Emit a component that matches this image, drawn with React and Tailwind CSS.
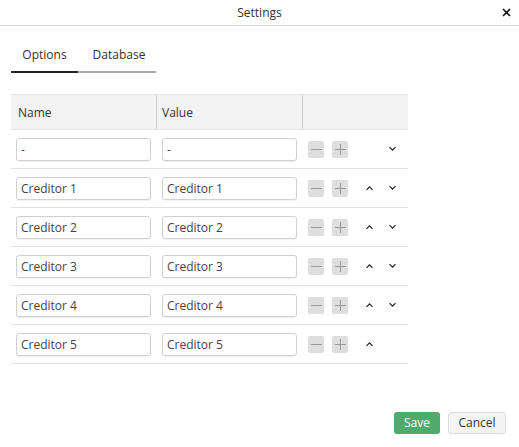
import React from 'react'

const ROWS = [
  { name: '-', value: '-', up: false, down: true },
  { name: 'Creditor 1', value: 'Creditor 1', up: true, down: true },
  { name: 'Creditor 2', value: 'Creditor 2', up: true, down: true },
  { name: 'Creditor 3', value: 'Creditor 3', up: true, down: true },
  { name: 'Creditor 4', value: 'Creditor 4', up: true, down: true },
  { name: 'Creditor 5', value: 'Creditor 5', up: true, down: false },
]

function Chevron({ up }) {
  return (
    <svg width="9" height="6" viewBox="0 0 9 6" className="block">
      <polyline
        points={up ? '1.5,4.8 4.5,1.8 7.5,4.8' : '1.5,1.2 4.5,4.2 7.5,1.2'}
        fill="none"
        stroke="#222"
        strokeWidth="1.2"
      />
    </svg>
  )
}

function SquareButton({ plus }) {
  return (
    <button className="w-[16px] h-[17px] bg-[#dedede] rounded-[2px] flex items-center justify-center">
      <svg width="11" height="11" viewBox="0 0 11 11">
        <line x1="0" y1="5.5" x2="11" y2="5.5" stroke="#9a9a9a" strokeWidth="1" />
        {plus && <line x1="5.5" y1="0" x2="5.5" y2="11" stroke="#9a9a9a" strokeWidth="1" />}
      </svg>
    </button>
  )
}

function TextBox({ value }) {
  return (
    <input
      readOnly
      value={value}
      className="w-[135px] h-[23px] px-[4px] border border-[#d0d0d0] rounded-[3px] text-[12px] text-[#444] bg-white shadow-[0_1px_1px_rgba(0,0,0,0.06)] outline-none"
    />
  )
}

export default function App() {
  return (
    <div className="h-[447px] w-[519px] bg-white flex flex-col text-[#333] font-['Open_Sans',sans-serif] text-[12px]">
      {/* Title bar */}
      <div className="h-[26px] border-b border-[#dcdcdc] flex items-center justify-center relative">
        <span className="text-[12px] text-[#333]">Settings</span>
        <button className="absolute right-[6px] top-[5px] w-[14px] h-[14px] flex items-center justify-center">
          <svg width="9" height="9" viewBox="0 0 9 9">
            <line x1="1" y1="1" x2="8" y2="8" stroke="#111" strokeWidth="1.6" />
            <line x1="8" y1="1" x2="1" y2="8" stroke="#111" strokeWidth="1.6" />
          </svg>
        </button>
      </div>

      {/* Tabs */}
      <div className="flex pl-[11px] mt-[13px]">
        <div className="h-[34px] w-[67px] flex items-center justify-center border-b-2 border-[#222]">
          Options
        </div>
        <div className="h-[34px] w-[78px] flex items-center justify-center pl-[4px] border-b-2 border-[#a9a9a9]">
          Database
        </div>
      </div>

      {/* Table */}
      <div className="ml-[11px] mt-[21px] w-[397px]">
        <div className="flex h-[36px] bg-[#f3f3f3] border-t border-[#e6e6e6] border-b border-[#dcdcdc]">
          <div className="w-[146px] flex items-center pl-[7px] pt-[1px] border-r border-[#cfcfcf]">Name</div>
          <div className="w-[146px] flex items-center pl-[5px] pt-[1px] border-r border-[#cfcfcf]">Value</div>
          <div className="flex-1" />
        </div>
        {ROWS.map((row, i) => (
          <div key={i} className="flex items-center h-[39px] border-b border-[#e2e2e2]">
            <div className="w-[146px] pl-[5px]">
              <TextBox value={row.name} />
            </div>
            <div className="w-[146px] pl-[5px]">
              <TextBox value={row.value} />
            </div>
            <div className="flex-1 flex items-center pl-[5px]">
              <SquareButton />
              <div className="w-[8px]" />
              <SquareButton plus />
              <div className="w-[26px] flex justify-end">{row.up && <Chevron up />}</div>
              <div className="w-[23px] flex justify-end">{row.down && <Chevron />}</div>
            </div>
          </div>
        ))}
      </div>

      {/* Footer */}
      <div className="mt-auto mb-[13px] mr-[13px] flex justify-end gap-[8px]">
        <button className="h-[22px] w-[46px] rounded-[3px] bg-[#4fab6d] text-white text-[12px]">Save</button>
        <button className="h-[22px] w-[58px] rounded-[3px] bg-[#f4f4f4] border border-[#dcdcdc] text-[#333] text-[12px]">
          Cancel
        </button>
      </div>
    </div>
  )
}
